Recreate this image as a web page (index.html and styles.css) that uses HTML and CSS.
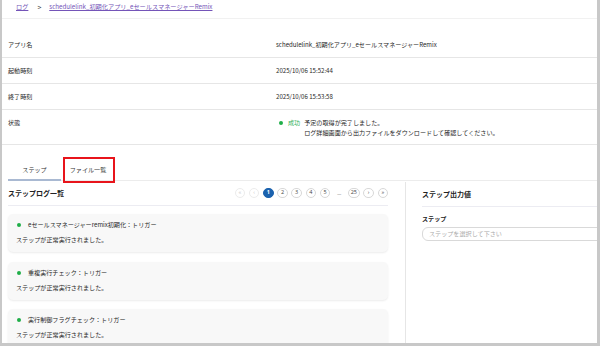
FILE: index.html
```html
<!DOCTYPE html>
<html lang="ja">
<head>
<meta charset="utf-8">
<link rel="stylesheet" href="styles.css">
</head>
<body>
<div class="frame">
  <div class="breadcrumb">
    <a class="crumb">ログ</a>
    <span class="sep">&gt;</span>
    <a class="crumb">schedulelink_初期化アプリ_eセールスマネージャーRemix</a>
  </div>

  <div class="details">
    <div class="row"><div class="label">アプリ名</div><div class="value">schedulelink_初期化アプリ_eセールスマネージャーRemix</div></div>
    <div class="row"><div class="label">起動時刻</div><div class="value">2025/10/06 15:52:44</div></div>
    <div class="row"><div class="label">終了時刻</div><div class="value">2025/10/06 15:53:58</div></div>
    <div class="row row-status">
      <div class="label">状態</div>
      <div class="value status">
        <span class="dot"></span>
        <span class="ok">成功</span>
        <span class="msg">予定の取得が完了しました。<br>ログ詳細画面から出力ファイルをダウンロードして確認してください。</span>
      </div>
    </div>
  </div>

  <div class="tabs">
    <div class="tab active">ステップ</div>
    <div class="tab">ファイル一覧<span class="highlight"></span></div>
  </div>

  <div class="panes">
    <div class="left">
      <div class="pane-head">
        <div class="title">ステップログ一覧</div>
        <div class="pager">
          <span class="pg dis">«</span>
          <span class="pg dis">‹</span>
          <span class="pg cur">1</span>
          <span class="pg">2</span>
          <span class="pg">3</span>
          <span class="pg">4</span>
          <span class="pg">5</span>
          <span class="ellipsis">—</span>
          <span class="pg wide">25</span>
          <span class="pg">›</span>
          <span class="pg">»</span>
        </div>
      </div>
      <div class="cards">
        <div class="card">
          <div class="card-title"><span class="dot"></span>eセールスマネージャーremix初期化：トリガー</div>
          <div class="card-desc">ステップが正常実行されました。</div>
        </div>
        <div class="card">
          <div class="card-title"><span class="dot"></span>重複実行チェック：トリガー</div>
          <div class="card-desc">ステップが正常実行されました。</div>
        </div>
        <div class="card">
          <div class="card-title"><span class="dot"></span>実行制御フラグチェック：トリガー</div>
          <div class="card-desc">ステップが正常実行されました。</div>
        </div>
      </div>
    </div>
    <div class="right">
      <div class="pane-head"><div class="title">ステップ出力値</div></div>
      <div class="field-label">ステップ</div>
      <div class="select">ステップを選択して下さい</div>
    </div>
  </div>
</div>
</body>
</html>
```

FILE: styles.css
```css
* { box-sizing: border-box; }
html, body { margin: 0; padding: 0; background: #fff; }
body {
  font-family: "Noto Sans CJK JP", "Noto Sans", sans-serif;
  color: #222;
  font-size: 6px;
}
.frame {
  width: 600px;
  height: 346px;
  border-left: 2px solid #c8c8c8;
  border-right: 3px solid #c8c8c8;
  border-bottom: 3px solid #c8c8c8;
  overflow: hidden;
  position: relative;
}
.breadcrumb {
  height: 19px;
  border-bottom: 1px solid #f1f1f1;
  padding: 2px 0 0 14px;
  display: flex;
  align-items: flex-start;
  line-height: 10px;
  font-size: 6.2px;
}
.crumb { color: #7454b8; text-decoration: underline; }
.sep { color: #444; margin: 0 8px 0 9px; font-size: 7px; }

.details { padding-top: 13px; }
.row {
  display: grid;
  grid-template-columns: 268px 1fr;
  height: 26px;
  align-items: center;
  padding-left: 6px;
  border-bottom: 1px solid #e6e6e6;
  line-height: 10px;
  font-size: 6.1px;
}
.label { color: #262626; }
.value { color: #262626; }
.row-status { height: 35px; align-items: start; padding-top: 8px; }
.status { display: flex; align-items: flex-start; padding-left: 3px; }
.dot {
  display: inline-block;
  width: 4px; height: 4px;
  border-radius: 50%;
  background: #1fae48;
  flex: none;
}
.status .dot { margin: 3px 5px 0 0; }
.ok { color: #30b058; margin-right: 4px; }
.msg { color: #262626; }

.tabs {
  margin: 17px 0 0 6px;
  display: flex;
  border-bottom: 1px solid #ececec;
  height: 19px;
}
.tab {
  width: 54px;
  text-align: center;
  line-height: 16px;
  font-size: 6.1px;
  color: #333;
  position: relative;
}
.tab.active { border-bottom: 2px solid #a9b9d2; margin-bottom: -1px; width: 53px; }
.highlight {
  position: absolute;
  left: 2px; top: -5px;
  width: 52px; height: 26px;
  border: 2px solid #e8141b;
}

.panes { display: flex; height: 162px; }
.left { width: 386px; padding-left: 6px; }
.right {
  margin-left: 17px;
  border-left: 1px solid #e6e6e6;
  padding-left: 16px;
  flex: 1;
  overflow: hidden;
  margin-top: 1px;
}
.pane-head {
  height: 25px;
  display: flex;
  align-items: center;
  justify-content: space-between;
  border-bottom: 1.5px solid #ececf2;
}
.title { font-weight: bold; font-size: 7px; color: #222; }
.pager { display: flex; align-items: center; gap: 3.7px; }
.pg {
  width: 10.5px; height: 10.5px;
  border-radius: 50%;
  border: 1px solid #d8d8d8;
  display: flex; align-items: center; justify-content: center;
  font-family: "Open Sans", sans-serif;
  font-size: 5.5px;
  color: #444;
  line-height: 1;
}
.pg.dis { color: #c5c5c5; border-color: #ececec; }
.pg.cur { background: #1b62ae; border-color: #1b62ae; color: #fff; font-weight: bold; }
.pg.wide { width: 11.5px; border-radius: 6px; }
.ellipsis { color: #666; font-size: 5px; margin: 0 3px; }

.cards { display: flex; flex-direction: column; gap: 9.5px; margin-top: 8px; }
.card {
  background: #f8f8f8;
  border-radius: 5px;
  box-shadow: 0 1px 2px rgba(0,0,0,0.08);
  height: 38px;
  padding: 6px 8px 0 8px;
  font-size: 6.1px;
  color: #262626;
}
.card-title { line-height: 10px; display: flex; align-items: center; }
.card .dot { margin: 0 7px 0 1px; }
.card-desc { line-height: 10px; margin-top: 5px; }

.field-label { font-weight: bold; font-size: 6.1px; margin-top: 8px; line-height: 8px; color: #222; }
.select {
  margin-top: 4px;
  width: 200px;
  height: 14px;
  border: 1px solid #d9d9d9;
  border-radius: 6px;
  padding-left: 6px;
  line-height: 12px;
  font-size: 6.1px;
  color: #aaa;
}
```
